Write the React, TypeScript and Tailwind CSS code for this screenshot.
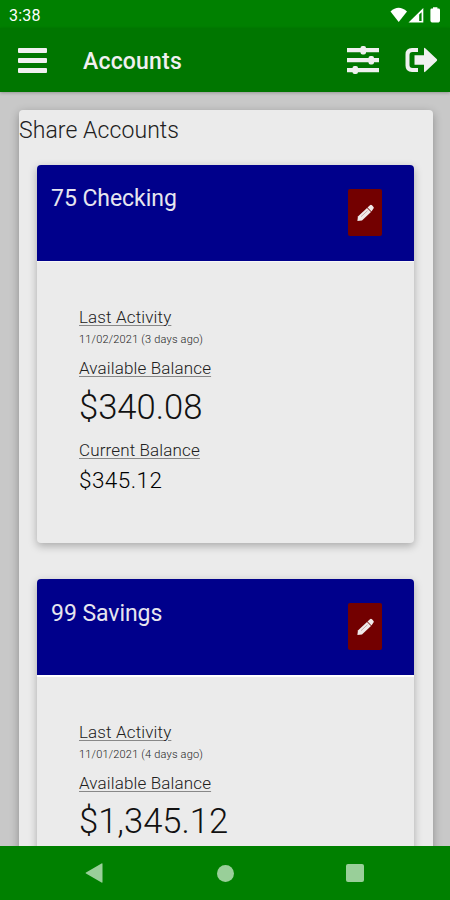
import React from 'react';

type Account = {
  name: string;
  activity: string;
  available: string;
  current?: string;
};

const accounts: Account[] = [
  { name: '75 Checking', activity: '11/02/2021 (3 days ago)', available: '$340.08', current: '$345.12' },
  { name: '99 Savings', activity: '11/01/2021 (4 days ago)', available: '$1,345.12' },
];

function StatusBar() {
  return (
    <div className="flex h-7 shrink-0 items-center justify-between bg-[#008000] pl-[9px] pr-2 text-white">
      <span className="pt-[3px] text-[16px] leading-5 tracking-[0.2px]">3:38</span>
      <svg width="52" height="16" viewBox="0 0 52 16" fill="currentColor" className="mt-px">
        <path d="M0.500 4.500Q8.500 -3 17 4.500L8.700 15Z" />
        <path fillRule="evenodd" d="M18.500 15.500L33.300 1V15.500ZM29.200 7.500V14H31.600V5.200Z" />
        <path d="M43 0.200h4.400v1.300h1.200q1.400 0 1.400 1.400v10.700q0 1.800-1.400 1.800h-6.800q-1.400 0-1.400-1.800V2.900q0-1.400 1.400-1.400h1.200z" />
      </svg>
    </div>
  );
}

function AppBar() {
  return (
    <header className="z-10 flex h-16 shrink-0 items-center bg-[#007600] pl-[18px] pr-3 text-[#f0f0f0] shadow-[0_1px_3px_rgba(0,0,0,0.25)]">
      <button aria-label="Menu" className="flex w-[29px] flex-col gap-[5px]">
        <span className="h-[5px] w-full rounded-[1px] bg-[#f0f0f0]" />
        <span className="h-[5px] w-full rounded-[1px] bg-[#f0f0f0]" />
        <span className="h-[5px] w-full rounded-[1px] bg-[#f0f0f0]" />
      </button>
      <h1 className="ml-9 mt-1 flex-1 text-[23px] font-medium leading-7 tracking-[0.2px]">Accounts</h1>
      <button aria-label="Settings">
        <svg width="32" height="28" viewBox="0 0 32 28" fill="currentColor">
          <path d="M0 2h32v4.300H0zM0 12h32v4.300H0zM0 22h32v4.300H0z" />
          <rect x="13.500" y="0" width="5.500" height="8.400" rx="2" />
          <rect x="21.500" y="10" width="5.500" height="8.400" rx="2" />
          <rect x="5.500" y="20" width="5.500" height="8" rx="2" />
        </svg>
      </button>
      <button aria-label="Sign out" className="ml-[26px]">
        <svg width="33" height="26" viewBox="0 0 33 26" fill="currentColor">
          <path d="M13 1v4H7.500Q4.500 5 4.500 8v10q0 3 3 3H13v4H7Q0.500 25 0.500 18.500v-11Q0.500 1 7 1z" />
          <path d="M9.500 8.200h9.500V2q0-2 1.500-.5L31.700 12q1 1 0 2L20.500 24.500q-1.500 1.500-1.500-.5V17.800H9.500z" />
        </svg>
      </button>
    </header>
  );
}

function PencilIcon() {
  return (
    <svg width="17" height="18" viewBox="0 0 17 18" fill="currentColor">
      <path d="M0.400 16.900L0.900 12.600 10 4 14 8 5 16.500Z" />
      <path d="M10.500 3.500L13 1.200q1-.9 2 .1l1.300 1.400q1 1 0 2L14.500 7.400Z" />
      <path d="M4 12.700L10.500 6.700" stroke="#b08080" strokeWidth="0.600" />
    </svg>
  );
}

function Label({ children }: { children: React.ReactNode }) {
  return (
    <div className="text-[17px] font-light leading-5 tracking-[0.14px] underline decoration-[#888] decoration-1 underline-offset-2">
      {children}
    </div>
  );
}

function AccountCard({ account, first }: { account: Account; first: boolean }) {
  return (
    <article className="h-[378px] shrink-0 overflow-hidden rounded-[4px] bg-[#ebebeb] shadow-[0_3px_8px_rgba(0,0,0,0.28)]">
      <div className="flex h-24 items-start justify-between bg-[#00008b] pl-3.5 pr-8 pt-6 text-[#e6e6ef]">
        <h3 className={`${first ? 'mt-[-5px]' : 'mt-[-4px]'} text-[23px] leading-[30px] tracking-[-0.05px]`}>{account.name}</h3>
        <button aria-label="Edit" className="flex h-[47px] w-[34px] items-center justify-center rounded-[2px] bg-[#730000] text-[#f0eaea]">
          <PencilIcon />
        </button>
      </div>
      <div className={`${first ? 'border-t border-white/60' : 'border-t-2 border-white'} pl-[42px] pt-[45px]`}>
        <Label>Last Activity</Label>
        <div className="mt-[5px] text-[11px] font-light leading-4 tracking-[0.19px] text-[#222]">{account.activity}</div>
        <div className="mt-2.5">
          <Label>Available Balance</Label>
        </div>
        <div className={`${first ? 'mt-[9px]' : 'mt-2'} text-[34.600px] font-light leading-[40px] text-[#111]`}>{account.available}</div>
        {account.current && (
          <>
            <div className="mt-[13px]">
              <Label>Current Balance</Label>
            </div>
            <div className="mt-1.5 text-[22.500px] font-light leading-7 tracking-[0.450px] text-black">{account.current}</div>
          </>
        )}
      </div>
    </article>
  );
}

function NavigationBar() {
  return (
    <nav className="z-10 flex h-[54px] shrink-0 items-center justify-between bg-[#008000] pl-[85px] pr-[86px] text-[#99cf99]">
      <svg width="18" height="20" viewBox="0 0 18 20" fill="currentColor">
        <path d="M17.500 1v18Q17.500 20 16.500 19.500L1 10.500q-1-.5 0-1L16.500.5Q17.500 0 17.500 1z" />
      </svg>
      <span className="ml-[2px] size-[17px] rounded-full bg-[#99cf99]" />
      <span className="size-[18px] rounded-[2px] bg-[#99cf99]" />
    </nav>
  );
}

export default function App() {
  return (
    <div className="flex h-[900px] w-[450px] flex-col overflow-hidden bg-[#c8c8c8] font-[Roboto,sans-serif] text-[#202020]">
      <StatusBar />
      <AppBar />
      <main className="min-h-0 flex-1 overflow-hidden pl-[19px] pr-[17px] pt-[18px]">
        <section className="flex h-[1000px] flex-col rounded-[4px] bg-[#ebebeb] shadow-[0_3px_10px_rgba(0,0,0,0.3)]">
          <h2 className="pt-[5px] text-[23px] font-light leading-8 tracking-[0.080px]">Share Accounts</h2>
          <div className="mt-[18px] flex flex-col gap-9 pl-[18px] pr-[19px]">
            {accounts.map((account, index) => (
              <AccountCard key={account.name} account={account} first={index === 0} />
            ))}
          </div>
        </section>
      </main>
      <NavigationBar />
    </div>
  );
}
